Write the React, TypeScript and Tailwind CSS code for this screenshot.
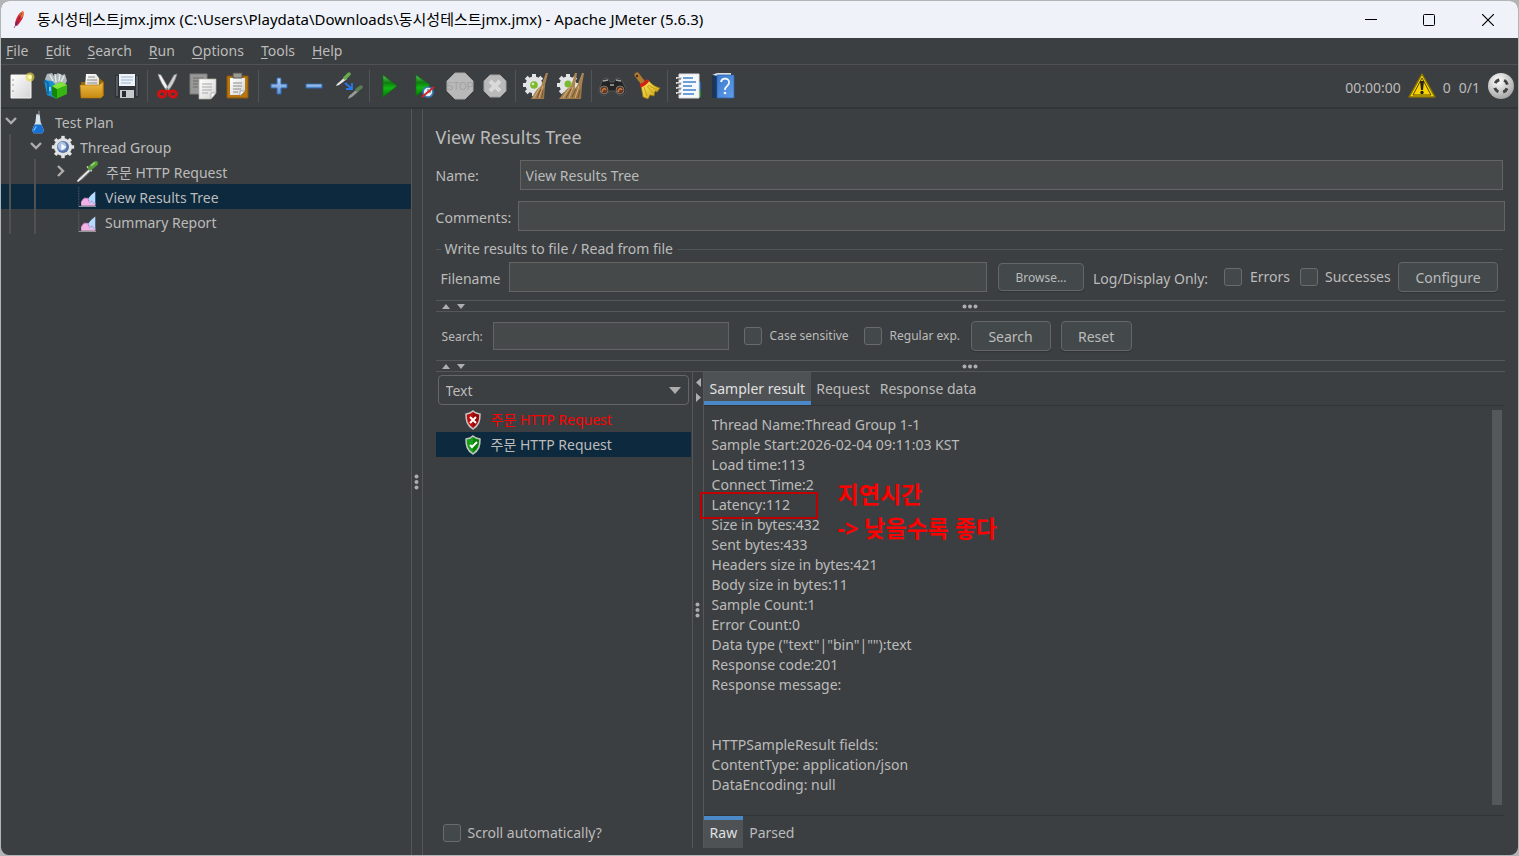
import type { ReactNode } from "react";

const inputClass =
  "min-w-0 rounded-none border border-[#646464] bg-[#45494a] px-[5px] text-sm text-[#bbbbbb] outline-none focus:border-[#4a88c7]";
const buttonClass =
  "shrink-0 rounded border border-[#646668] bg-[#43494b] pt-px shadow-[0_1px_1px_#313435] hover:bg-[#4c5254]";
const checkboxClass =
  "h-[18px] w-[18px] shrink-0 appearance-none rounded-[3px] border border-[#6b6b6b] bg-[#43494a] checked:bg-[#4a88c7]";

function Svg({ size = 28, children }: { size?: number; children: ReactNode }) {
  return (
    <svg width={size} height={size} viewBox="0 0 28 28" fill="none" className="shrink-0" aria-hidden="true">
      {children}
    </svg>
  );
}

function Defs() {
  return (
    <svg width="0" height="0" className="absolute" aria-hidden="true">
      <defs>
        <linearGradient id="paper" x1="0" y1="0" x2="1" y2="1">
          <stop stopColor="#ffffff" />
          <stop offset="1" stopColor="#d4d4d4" />
        </linearGradient>
        <linearGradient id="folder" x1="0" y1="0" x2="0" y2="1">
          <stop stopColor="#eebc4a" />
          <stop offset="1" stopColor="#c88a10" />
        </linearGradient>
        <linearGradient id="green" x1="0" y1="0" x2="0" y2="1">
          <stop stopColor="#5fc95a" />
          <stop offset="0.35" stopColor="#0f7d10" />
          <stop offset="0.6" stopColor="#12b512" />
          <stop offset="1" stopColor="#067806" />
        </linearGradient>
        <linearGradient id="blue" x1="0" y1="0" x2="0" y2="1">
          <stop stopColor="#b5d2f3" />
          <stop offset="1" stopColor="#5d93d8" />
        </linearGradient>
        <linearGradient id="book" x1="0" y1="0" x2="1" y2="1">
          <stop stopColor="#3b7ad0" />
          <stop offset="1" stopColor="#5f9ce8" />
        </linearGradient>
        <linearGradient id="broom" x1="0" y1="0" x2="1" y2="1">
          <stop stopColor="#fff06a" />
          <stop offset="1" stopColor="#c99a08" />
        </linearGradient>
        <linearGradient id="straw" x1="0" y1="0" x2="1" y2="1">
          <stop stopColor="#c19a68" />
          <stop offset="1" stopColor="#93703f" />
        </linearGradient>
        <radialGradient id="ball" cx="0.4" cy="0.3" r="0.8">
          <stop stopColor="#ffffff" />
          <stop offset="1" stopColor="#9a9a9a" />
        </radialGradient>
      </defs>
    </svg>
  );
}

const NewIcon = () => (
  <Svg>
    <path d="M3 3h20v23H3z" fill="url(#paper)" stroke="#f5f5f0" />
    <path d="M4 8h2M4 13h2M4 19h2" stroke="#999" />
    <circle cx="22" cy="5" r="4.5" fill="#e8d84a" opacity="0.65" />
    <circle cx="22" cy="5" r="2" fill="#fffcb0" />
  </Svg>
);

const TemplatesIcon = () => (
  <Svg>
    <path d="M4 2l5-1 2 3 4-3 4 2 3-1 2 7-3 5H5L2 7z" fill="#aeb8bd" />
    <path d="M7 3l3 6M12 2l1 8M17 2l-1 7M21 4l-3 6" stroke="#e4e8ea" strokeWidth="1.5" />
    <path d="M1 8l8 1 3 3v14l-8-3z" fill="#1b8fd0" />
    <path d="M1 8l4 3v11" stroke="#0a62a0" strokeWidth="1.5" />
    <path d="M9 14l9-4 6 3v9l-11 5-4-4z" fill="#36b512" />
    <path d="M9 14l5 3v10l-5-4z" fill="#168407" />
    <path d="M9 14l9-4 6 3-10 4z" fill="#83e33c" />
    <path d="M6 15h2v4H6z" fill="#7fd0f5" />
  </Svg>
);

const OpenIcon = () => (
  <Svg>
    <path d="M3 10h4l2-4h12l5 4v14H4z" fill="#9b6908" />
    <path d="M8 2h10l3 4v10H7z" fill="url(#paper)" />
    <path d="M10 5h7M9 8h10M9 11h10" stroke="#8d8d8d" />
    <path d="M2 13h19l4-3v14l-2 2H3z" fill="url(#folder)" stroke="#a87208" strokeWidth="0.6" />
  </Svg>
);

const SaveIcon = () => (
  <Svg>
    <path d="M2 3h24v22l-1 1H3l-1-1z" fill="#2f3338" />
    <path d="M3 4h2v20H3zM23 4h2v20h-2z" fill="#555b62" />
    <path d="M6 2h16v12H6z" fill="#eef3f8" />
    <path d="M8 5h12M8 8h12M8 11h10" stroke="#9ab6d4" strokeWidth="1.2" />
    <path d="M7 18h14v8H7z" fill="#c7cacc" />
    <path d="M9 19h4v6H9z" fill="#2a2d30" />
  </Svg>
);

const CutIcon = () => (
  <Svg>
    <path d="M4 2l3 1 8 14-2 2C9 14 6 9 4 2z" fill="#f4f4f4" stroke="#858585" strokeWidth="0.7" />
    <path d="M23 2l-3 1-8 14 2 2c4-5 7-10 9-17z" fill="#cfcfcf" stroke="#858585" strokeWidth="0.7" />
    <ellipse cx="8" cy="22" rx="3.5" ry="3" stroke="#d41111" strokeWidth="3" />
    <ellipse cx="19" cy="22" rx="3.5" ry="3" stroke="#d41111" strokeWidth="3" />
    <path d="M9 18h9l-4 3z" fill="#d41111" />
    <circle cx="13.5" cy="17" r="1" fill="#777" />
  </Svg>
);

const CopyIcon = () => (
  <Svg>
    <path d="M1 2h17v20H1z" fill="#989898" stroke="#7d7d7d" />
    <path d="M4 6h11M4 9h7M4 12h5M4 15h5" stroke="#6c6c6c" />
    <path d="M10 7h17v14l-5 6H10z" fill="url(#paper)" stroke="#b5b5a8" strokeWidth="0.7" />
    <path d="M13 12h10M13 15h10M13 18h10M13 21h6" stroke="#aaa" />
    <path d="M22 27v-6h5z" fill="#fff" stroke="#999" strokeWidth="0.7" />
  </Svg>
);

const PasteIcon = () => (
  <Svg>
    <path d="M3 4h21v22H3z" fill="#b87610" stroke="#8b570a" />
    <path d="M6 6h15v13l-4 4H6z" fill="url(#paper)" />
    <path d="M9 1h9v5H9z" fill="#9b9b95" stroke="#55554f" />
    <path d="M9 11h9M9 14h9M9 17h8M9 20h5" stroke="#8c8c8c" />
    <path d="M16 24v-5h5z" fill="#fff" stroke="#888" strokeWidth="0.7" />
  </Svg>
);

const PlusIcon = () => (
  <Svg>
    <path d="M12 6h4v6h6v4h-6v6h-4v-6H6v-4h6z" fill="url(#blue)" stroke="#3169b4" />
  </Svg>
);

const MinusIcon = () => (
  <Svg>
    <path d="M6 12h16v4H6z" fill="url(#blue)" stroke="#3169b4" />
  </Svg>
);

const ToggleIcon = () => (
  <Svg>
    <path d="M1 14L2 12 10 5l2 2-8 6z" fill="#e6e6e6" />
    <path d="M10 6l4-4" stroke="#67ad4f" strokeWidth="3.5" strokeLinecap="round" />
    <path d="M13 27l1-3 8-7 2 2-7 6z" fill="#9a9a9a" />
    <path d="M22 18l4-3" stroke="#597f51" strokeWidth="3.5" strokeLinecap="round" />
    <path d="M10 11l6 5M17 11v6h-6" stroke="#2878ee" strokeWidth="1.8" />
  </Svg>
);

const PlayIcon = () => (
  <Svg>
    <path d="M7 3l14 11L7 25z" fill="url(#green)" stroke="#0a7208" strokeWidth="0.7" />
  </Svg>
);

const PlayNoTimersIcon = () => (
  <Svg>
    <path d="M5 3l14 10L5 24z" fill="url(#green)" stroke="#0a7208" strokeWidth="0.7" />
    <circle cx="17" cy="20" r="5" fill="#e3f0fa" stroke="#397bb7" strokeWidth="1.7" />
    <path d="M17 17v3h3" stroke="#4b6577" />
    <path d="M11 25l12-10" stroke="#d72323" strokeWidth="1.8" />
  </Svg>
);

const StopIcon = () => (
  <Svg>
    <path d="M9 1h10l8 8v10l-8 8H9l-8-8V9z" fill="#b9b9b9" stroke="#a8a8a8" />
    <text x="14" y="18" textAnchor="middle" fontFamily="Liberation Sans" fontSize="10" fill="#a2a2a2">
      STOP
    </text>
  </Svg>
);

const ShutdownIcon = () => (
  <Svg>
    <path d="M9 3h10l6 6v10l-6 6H9l-6-6V9z" fill="#bababa" stroke="#a2a2a2" />
    <path d="M9 9l10 10M19 9L9 19" stroke="#dadada" strokeWidth="4" />
  </Svg>
);

function Gear({ cx, cy, r }: { cx: number; cy: number; r: number }) {
  return (
    <g fill="#e2e3e4">
      {[0, 45, 90, 135].map((angle) => (
        <rect key={angle} x={cx - 2} y={cy - r} width="4" height={r * 2} transform={`rotate(${angle} ${cx} ${cy})`} />
      ))}
      <circle cx={cx} cy={cy} r={r - 2.5} />
    </g>
  );
}

const ClearIcon = () => (
  <Svg>
    <Gear cx={12} cy={13} r={11} />
    <circle cx="12" cy="13" r="3.8" fill="#7cb92f" />
    <circle cx="11" cy="12" r="1.3" fill="#d0f09d" />
    <path d="M26 1l-3 12-1 14H9c3-4 4-9 10-13l5-13z" fill="url(#straw)" />
    <path d="M18 15l-6 11M21 14l-4 12" stroke="#d3ad78" />
    <path d="M19 17l-4 9M21 18l-1 8" stroke="#765231" />
  </Svg>
);

const ClearAllIcon = () => (
  <Svg>
    <Gear cx={11} cy={13} r={11} />
    <circle cx="11" cy="12" r="3.5" fill="#7cb92f" />
    <path d="M20 1l-2 12-1 14H2c4-4 5-9 12-13l4-13zM27 1l-2 12-1 14H12c3-4 4-9 8-13l5-13z" fill="url(#straw)" />
    <path d="M13 15l-7 11M16 15l-4 11M22 14l-4 12" stroke="#d3ad78" />
    <path d="M14 17l-5 9M19 17l-4 8M23 18l-2 8" stroke="#765231" />
  </Svg>
);

const BinocularsIcon = () => (
  <Svg>
    <path d="M5 7l5-1 2 4h4l2-4 5 1 5 10c0 8-10 8-11 2h-6C10 25 0 25 1 17z" fill="#232323" stroke="#555" />
    <path d="M5 9l5-1M18 8l5 1M12 13h4" stroke="#a6a6a6" strokeWidth="1.5" />
    <circle cx="6" cy="18" r="4" fill="#65391f" stroke="#777" />
    <circle cx="22" cy="18" r="4" fill="#65391f" stroke="#777" />
    <path d="M4 20c1-4 3-4 4-2M20 20c1-4 3-4 4-2" stroke="#cf7a42" strokeWidth="1.5" />
  </Svg>
);

const BroomIcon = () => (
  <Svg>
    <path d="M4 3l7 9" stroke="#b07a2c" strokeWidth="5" strokeLinecap="round" />
    <circle cx="4" cy="4" r="1.2" fill="#4a290d" />
    <path d="M8 13l7-5c4 5 8 7 12 8l-3 4-2-1-1 5-4-1-2 4-5-2z" fill="url(#broom)" stroke="#99780a" strokeWidth="0.7" />
    <path d="M14 14l6 7M15 13l9 5M11 15l3 9" stroke="#c59d14" />
    <path d="M7 14c3-1 6-3 8-6" stroke="#d12017" strokeWidth="3.2" />
  </Svg>
);

const FunctionIcon = () => (
  <Svg>
    <path d="M23 10h4v8h-4z" fill="#2666b0" />
    <path d="M23 18h4v7h-4z" fill="#258833" />
    <path d="M5 2h20v24H5z" fill="#f5f8fc" stroke="#ddd" />
    <path d="M9 6h10M9 10h13M9 14h9M9 18h13M9 22h11" stroke="#3e81cb" strokeWidth="1.3" />
    <path d="M2 6h6M2 11h6M2 16h6M2 21h6" stroke="#d7d7d7" strokeWidth="2" />
    <path d="M3 7h4M3 12h4M3 17h4M3 22h4" stroke="#444" />
  </Svg>
);

const HelpIcon = () => (
  <Svg>
    <path d="M3 3l5-2h14v3H7z" fill="#d8dde3" />
    <path d="M3 3l5 1v22H3z" fill="#1c3558" />
    <path d="M8 3h17v23H8z" fill="url(#book)" stroke="#2b62ab" strokeWidth="0.7" />
    <path d="M12 10c1-5 9-4 8 1 0 3-4 3-4 7" stroke="#f2f7ff" strokeWidth="1.8" />
    <circle cx="16" cy="21" r="1.3" fill="#f2f7ff" />
  </Svg>
);

const toolGroups = [
  [
    { label: "New", Icon: NewIcon },
    { label: "Templates", Icon: TemplatesIcon },
    { label: "Open", Icon: OpenIcon },
    { label: "Save", Icon: SaveIcon },
  ],
  [
    { label: "Cut", Icon: CutIcon },
    { label: "Copy", Icon: CopyIcon },
    { label: "Paste", Icon: PasteIcon },
  ],
  [
    { label: "Expand all", Icon: PlusIcon },
    { label: "Collapse all", Icon: MinusIcon },
    { label: "Toggle", Icon: ToggleIcon },
  ],
  [
    { label: "Start", Icon: PlayIcon },
    { label: "Start no pauses", Icon: PlayNoTimersIcon },
    { label: "Stop", Icon: StopIcon },
    { label: "Shutdown", Icon: ShutdownIcon },
  ],
  [
    { label: "Clear", Icon: ClearIcon },
    { label: "Clear all", Icon: ClearAllIcon },
  ],
  [
    { label: "Search tree", Icon: BinocularsIcon },
    { label: "Reset search", Icon: BroomIcon },
  ],
  [
    { label: "Function helper", Icon: FunctionIcon },
    { label: "Help contents", Icon: HelpIcon },
  ],
];

const menus = ["File", "Edit", "Search", "Run", "Options", "Tools", "Help"];

const resultText = [
  "Thread Name:Thread Group 1-1",
  "Sample Start:2026-02-04 09:11:03 KST",
  "Load time:113",
  "Connect Time:2",
  "Latency:112",
  "Size in bytes:432",
  "Sent bytes:433",
  "Headers size in bytes:421",
  "Body size in bytes:11",
  "Sample Count:1",
  "Error Count:0",
  'Data type ("text"|"bin"|""):text',
  "Response code:201",
  "Response message:",
  "",
  "",
  "HTTPSampleResult fields:",
  "ContentType: application/json",
  "DataEncoding: null",
];

function TitleBar() {
  return (
    <header className="flex h-[37px] shrink-0 items-center bg-[#eff3f9] text-black">
      <svg width="16" height="22" viewBox="0 0 16 22" className="ml-2.5 mr-2.5 shrink-0" aria-hidden="true">
        <path d="M12 2c2 4-1 10-6 15l-2-1C4 11 7 4 12 2z" fill="#d22435" />
        <path d="M12 2c1 2 0 4-1 7L8 6c2-2 2-3 4-4z" fill="#ee7b29" />
        <path d="M5 12l3 1-3 4-1-1z" fill="#9a2266" />
        <path d="M11 4L3 19" stroke="#652058" strokeWidth="0.7" />
      </svg>
      <h1 className="grow truncate text-[15px]">
        동시성테스트jmx.jmx (C:\Users\Playdata\Downloads\동시성테스트jmx.jmx) - Apache JMeter (5.6.3)
      </h1>
      <div className="flex h-full shrink-0">
        <button aria-label="Minimize" className="grid w-[58px] place-items-center">
          <svg width="12" height="12" stroke="currentColor"><path d="M0 5.5h12" /></svg>
        </button>
        <button aria-label="Maximize" className="grid w-[58px] place-items-center">
          <svg width="12" height="12" fill="none" stroke="currentColor"><rect x="0.5" y="0.5" width="11" height="11" rx="1" /></svg>
        </button>
        <button aria-label="Close" className="grid w-[60px] place-items-center">
          <svg width="12" height="12" stroke="currentColor" strokeWidth="1.2"><path d="M0 0l12 12M12 0L0 12" /></svg>
        </button>
      </div>
    </header>
  );
}

function Toolbar() {
  return (
    <div className="flex h-[44px] shrink-0 items-center border-b-2 border-[#323537] pl-[3px]">
      {toolGroups.map((group, i) => (
        <div key={i} className="flex items-center">
          {i > 0 && <span className="ml-[3px] mr-[2px] h-8 w-px bg-[#515557]" />}
          {group.map(({ label, Icon }) => (
            <button key={label} aria-label={label} className="grid h-9 w-[35px] place-items-center">
              <Icon />
            </button>
          ))}
        </div>
      ))}
      <div className="ml-auto flex items-center pr-[3px]">
        <span className="pt-[3px]">00:00:00</span>
        <button aria-label="Show log" className="mx-[7px]">
          <Svg>
            <path d="M14 2l13 23H1z" fill="#f9d300" stroke="#857006" strokeWidth="1.5" strokeLinejoin="round" />
            <path d="M14 6l9 17H5z" stroke="#5b4b00" strokeWidth="1" />
            <path d="M12 9h4l-1 9h-2z" fill="#222" />
            <circle cx="14" cy="20.5" r="1.7" fill="#222" />
          </Svg>
        </button>
        <span className="mr-2 pt-[3px]">0</span>
        <span className="mr-[7px] pt-[3px]">0/1</span>
        <Svg>
          <circle cx="14" cy="14" r="13" fill="url(#ball)" />
          <circle cx="14" cy="14" r="6.5" stroke="#424242" strokeWidth="3" strokeDasharray="5.2 5" strokeDashoffset="-2.5" />
        </Svg>
      </div>
    </div>
  );
}

function Chevron({ open }: { open?: boolean }) {
  return (
    <svg width="14" height="14" viewBox="0 0 14 14" fill="none" stroke="#adadad" strokeWidth="2.4" className="shrink-0" aria-hidden="true">
      <path d={open ? "M2 3l5 5 5-5" : "M4 1l5 5-5 5"} />
    </svg>
  );
}

const ChartIcon = () => (
  <Svg size={22}>
    <path d="M1 1v25" stroke="#777" strokeDasharray="1 1" />
    <path d="M4 25v-5l3-4 5-1 4 5 6 2v3z" fill="#f1b2e6" />
    <path d="M13 16l4-5 5-4v17l-3-2-3 1z" fill="#b4dbff" />
    <path d="M4 20l4-5 4 1 3 5 3-2 3 4" stroke="#c658b0" strokeDasharray="2 1" />
    <path d="M1 26h22" stroke="#b7b7b7" />
  </Svg>
);

function TestTree() {
  return (
    <nav className="w-[27%] max-w-[410px] shrink-0" aria-label="Test plan tree">
      <div className="flex h-[25px] items-center pl-[3px]">
        <Chevron open />
        <span className="ml-2 mr-[5px] flex">
          <Svg size={24}>
            <path d="M12 5h4l1 9 4 10-2 3H9l-2-3 4-10z" fill="#d5e4ed" />
            <path d="M10 17h8l3 7-2 3H9l-2-3z" fill="#1470d4" />
            <path d="M15 1v5" stroke="#8b8b8b" strokeWidth="1.5" />
            <path d="M12 19l-3 5" stroke="#75baff" strokeWidth="1.5" />
          </Svg>
        </span>
        <span className="pt-[2px]">Test Plan</span>
      </div>
      <div className="ml-2 border-l-2 border-[#515151]">
        <div className="flex h-[25px] items-center pl-[18px]">
          <Chevron open />
          <span className="ml-2 mr-[5px] flex">
            <Svg size={24}>
              <Gear cx={14} cy={14} r={13} />
              <circle cx="14" cy="14" r="7" fill="#5574ad" />
              <circle cx="13" cy="13" r="5" fill="#a9c0e2" />
              <path d="M12 10l6 4-6 4z" fill="#f2f7ff" />
            </Svg>
          </span>
          <span className="pt-[2px]">Thread Group</span>
        </div>
        <div className="ml-[23px] border-l-2 border-[#515151]">
          <div className="flex h-[25px] items-center pl-[18px]">
            <Chevron />
            <span className="mx-2 flex">
              <Svg size={22}>
                <path d="M1 27l3-6L16 10l3 3L8 24z" fill="#777" />
                <path d="M2 26L17 12" stroke="#f0f0f0" strokeWidth="2" />
                <path d="M14 7l6 6" stroke="#e8e8e8" strokeWidth="2" />
                <path d="M18 9l7-6" stroke="#579c38" strokeWidth="6" strokeLinecap="round" />
                <path d="M19 6l5-4" stroke="#9bdb76" strokeWidth="2" />
              </Svg>
            </span>
            <span className="pt-[2px] pl-[-2px]">주문 HTTP Request</span>
          </div>
          {["View Results Tree", "Summary Report"].map((name, i) => (
            <div key={name} className="relative flex h-[25px] items-center pl-[42px]">
              {i === 0 && <span className="absolute -left-[35px] right-0 -z-10 h-full bg-[#0d293e]" />}
              <ChartIcon />
              <span className="ml-[5px] pt-[2px]">{name}</span>
            </div>
          ))}
        </div>
      </div>
    </nav>
  );
}

function VerticalGrip() {
  return (
    <svg width="5" height="16" fill="#adadad" aria-hidden="true">
      <circle cx="2.5" cy="2.5" r="2" /><circle cx="2.5" cy="8" r="2" /><circle cx="2.5" cy="13.5" r="2" />
    </svg>
  );
}

function HorizontalSplitter() {
  return (
    <div className="flex h-[12px] shrink-0 items-center border-y border-[#555759] pl-[6px]">
      <svg width="24" height="8" fill="#adadad" aria-hidden="true"><path d="M0 7l4-5 4 5zM15 2h8l-4 5z" /></svg>
      <svg width="16" height="5" fill="#adadad" className="mx-auto" aria-hidden="true">
        <circle cx="2.5" cy="2.5" r="2" /><circle cx="8" cy="2.5" r="2" /><circle cx="13.5" cy="2.5" r="2" />
      </svg>
      <span className="w-[30px]" />
    </div>
  );
}

function ResultRow({ ok }: { ok?: boolean }) {
  return (
    <li className={ok ? "flex h-[25px] items-center bg-[#0d293e] pl-[27px]" : "flex h-[25px] items-center pl-[27px] text-[#ff0000]"}>
      <svg width="20" height="22" viewBox="0 0 20 22" className="mr-2 shrink-0" aria-hidden="true">
        <path d="M10 2l3 2 4 1c0 7-1 11-7 15C4 16 3 12 3 5l4-1z" fill={ok ? "#17a019" : "#bc1010"} stroke="#c4c4c4" strokeWidth="1.5" />
        <path d="M10 4v14c4-3 6-7 6-12z" fill={ok ? "#078108" : "#930707"} />
        <path d={ok ? "M7 11l2 2 5-5" : "M7 8l6 6M13 8l-6 6"} stroke="#fff" strokeWidth="2" fill="none" />
      </svg>
      주문 HTTP Request
    </li>
  );
}

function ResultsPane() {
  return (
    <div className="flex min-h-0 grow pb-[7px]">
      <div className="flex w-[255px] shrink-0 flex-col">
        <div className="relative mx-[2px] mt-[3px]">
          <select aria-label="Renderer" className="h-[30px] w-full appearance-none rounded border border-[#646668] bg-[#3c3f41] px-[7px] pt-px text-sm">
            <option>Text</option>
          </select>
          <svg width="12" height="7" fill="#adadad" className="pointer-events-none absolute right-2 top-3" aria-hidden="true"><path d="M0 0h12L6 7z" /></svg>
        </div>
        <ul className="mt-[2px] grow">
          <ResultRow />
          <ResultRow ok />
        </ul>
        <label className="mb-[5px] ml-[7px] flex items-center gap-[7px]">
          <input type="checkbox" className={checkboxClass} />
          <span className="pt-px">Scroll automatically?</span>
        </label>
      </div>
      <div className="relative ml-px flex w-[12px] shrink-0 items-center justify-center border-x border-[#555759]">
        <svg width="6" height="26" fill="#adadad" className="absolute top-[6px]" aria-hidden="true"><path d="M6 0v9L1 4.500zM1 15v9l5-4.500z" /></svg>
        <VerticalGrip />
      </div>
      <div className="flex min-w-0 grow flex-col">
        <div className="flex h-[34px] shrink-0 border-b border-[#323537]" role="tablist">
          <button role="tab" aria-selected="true" className="border-b-4 border-[#4a88c7] bg-[#4e5254] px-[6px] pt-[5px] text-[#e0e0e0]">Sampler result</button>
          <button role="tab" className="px-[5px] pt-px">Request</button>
          <button role="tab" className="px-[5px] pt-px">Response data</button>
        </div>
        <div className="relative flex min-h-0 grow pb-[10px] pl-[8px] pr-[3px] pt-[4px]">
          <div className="min-h-0 grow overflow-hidden whitespace-pre pt-[5px] leading-5">
            {resultText.map((line, i) => (
              <p key={i} className="h-5">{line}</p>
            ))}
          </div>
          <div className="w-[10px] shrink-0 bg-[#55585a]" />
          <div className="absolute -left-[4px] top-[86px] h-[27px] w-[118px] border-2 border-[#c00000]" />
          <p className="absolute left-[134px] top-[71px] whitespace-pre text-[23px] leading-[34px] font-bold text-[#ff0000]">
            {"지연시간\n-> 낮을수록 좋다"}
          </p>
        </div>
        <div className="flex h-[33px] shrink-0 border-t border-[#323537]" role="tablist">
          <button role="tab" aria-selected="true" className="border-t-4 border-[#4a88c7] bg-[#4e5254] px-[6px] pb-[3px] text-[#e0e0e0]">Raw</button>
          <button role="tab" className="px-[6px] pt-px">Parsed</button>
        </div>
      </div>
    </div>
  );
}

export default function App() {
  return (
    <div className="h-screen overflow-hidden bg-[#b3b4b6] p-px font-['Noto_Sans','Noto_Sans_CJK_KR',sans-serif] text-sm text-[#bbbbbb]">
      <Defs />
      <div className="isolate flex h-full flex-col overflow-hidden rounded-lg bg-[#3c3f41]">
        <TitleBar />
        <div className="flex h-[27px] shrink-0 items-center gap-[17px] border-b border-[#515151] pl-[5px]" role="menubar">
          {menus.map((name) => (
            <button key={name} role="menuitem">
              <span className="underline underline-offset-2">{name[0]}</span>{name.slice(1)}
            </button>
          ))}
        </div>
        <Toolbar />
        <div className="flex min-h-0 grow">
          <TestTree />
          <div className="flex w-[12px] shrink-0 items-center justify-center border-x border-[#555759]">
            <VerticalGrip />
          </div>
          <main className="flex min-w-0 grow flex-col pl-[13px] pr-[13px]">
            <h2 className="mt-4 text-lg leading-6">View Results Tree</h2>
            <div className="mr-[2px] mt-[11px] flex h-[30px] items-center">
              <label htmlFor="name" className="w-[84px] shrink-0 pt-px">Name:</label>
              <input id="name" defaultValue="View Results Tree" className={`${inputClass} h-full grow`} />
            </div>
            <div className="mt-[11px] flex h-[30px] items-center">
              <label htmlFor="comments" className="w-[82px] shrink-0 pt-[3px]">Comments:</label>
              <input id="comments" className={`${inputClass} h-full grow`} />
            </div>
            <fieldset className="mr-[2px] mt-2 flex min-w-0 flex-col border-t border-[#515557] px-[5px]">
              <legend className="px-1 leading-5">Write results to file / Read from file</legend>
              <div className="mt-[3px] mb-2 flex h-[30px] items-center">
                <label htmlFor="filename" className="w-[68px] shrink-0 pt-[3px]">Filename</label>
                <input id="filename" className={`${inputClass} h-full grow`} />
                <button className={`${buttonClass} ml-[11px] h-7 w-[86px] text-xs`}>Browse...</button>
                <span className="ml-[9px] w-[131px] shrink-0 pt-[3px]">Log/Display Only:</span>
                <label className="flex w-[76px] shrink-0 items-center gap-2"><input type="checkbox" className={checkboxClass} />Errors</label>
                <label className="flex w-[98px] shrink-0 items-center gap-[7px]"><input type="checkbox" className={checkboxClass} />Successes</label>
                <button className={`${buttonClass} h-[30px] w-[100px]`}>Configure</button>
              </div>
            </fieldset>
            <HorizontalSplitter />
            <div className="flex h-[48px] shrink-0 items-center pl-[6px] text-xs">
              <label htmlFor="search" className="w-[51px] shrink-0 pt-px">Search:</label>
              <input id="search" className={`${inputClass} h-7 w-[236px]`} />
              <label className="ml-[15px] flex w-[120px] shrink-0 items-center gap-2"><input type="checkbox" className={checkboxClass} />Case sensitive</label>
              <label className="flex w-[107px] shrink-0 items-center gap-2"><input type="checkbox" className={checkboxClass} />Regular exp.</label>
              <button className={`${buttonClass} h-[30px] w-[80px] text-sm`}>Search</button>
              <button className={`${buttonClass} ml-[10px] h-[30px] w-[71px] text-sm`}>Reset</button>
            </div>
            <HorizontalSplitter />
            <ResultsPane />
          </main>
        </div>
      </div>
    </div>
  );
}
